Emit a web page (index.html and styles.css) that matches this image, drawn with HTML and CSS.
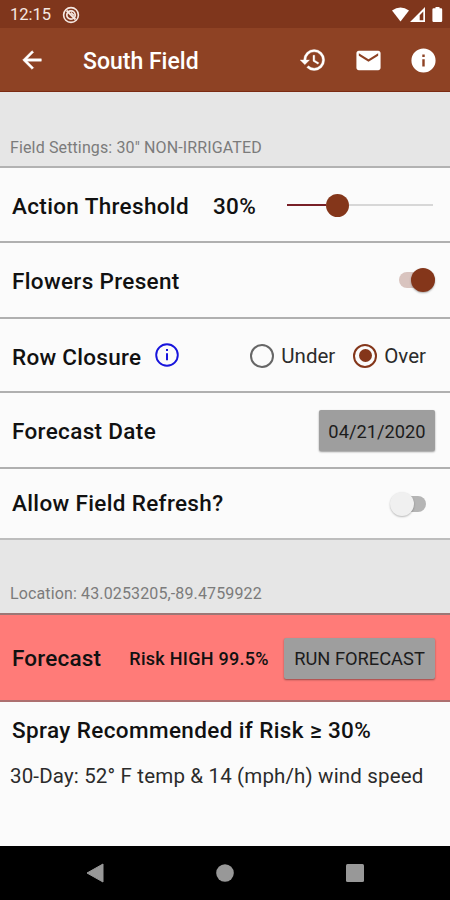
FILE: index.html
```html
<!DOCTYPE html>
<html lang="en">
<head>
<meta charset="utf-8">
<title>South Field</title>
<link rel="stylesheet" href="styles.css">
</head>
<body>
<div class="status">
  <span class="clock">12:15</span>
  <svg class="notif" width="18" height="18" viewBox="0 0 18 18" fill="none" stroke="#f6e9e3"><circle cx="9" cy="9" r="7.400" stroke-width="1.600"/><circle cx="9" cy="9" r="4.200" stroke-width="1.700"/><path d="M4.500 4.500l9 9" stroke-width="1.800"/><path d="M9 6.500l3 3" stroke-width="1.600"/></svg>
  <svg class="signals" width="54" height="18" viewBox="0 0 54 18" fill="#fff"><path d="M0 4.500Q8.500 -1.500 17 4.500L8.500 15.500z"/><path fill-rule="evenodd" d="M33 1v15H18z M31.300 5.500v8.800h-3.600V9.300z"/><path d="M43.500 1h4v1.200h1.500q1.200 0 1.200 1.200v11.400q0 1.200-1.200 1.200h-7.400q-1.200 0-1.200-1.200v-11.400q0-1.200 1.200-1.200h1.900z"/></svg>
</div>
<header class="toolbar">
  <svg class="back" width="28" height="28" viewBox="0 0 24 24" fill="#fff" stroke="#fff" stroke-width=".4"><path d="M20 11H7.830l5.590-5.590L12 4l-8 8 8 8 1.410-1.410L7.830 13H20v-2z"/></svg>
  <h1 class="title">South Field</h1>
  <svg class="tool history" width="28" height="28" viewBox="0 0 24 24" fill="#fff" stroke="#fff" stroke-width=".3"><path d="M13 3a9 9 0 0 0-9 9H1l3.890 3.890.07.14L9 12H6a7 7 0 1 1 7 7 6.960 6.960 0 0 1-4.940-2.060l-1.420 1.420A8.960 8.960 0 0 0 13 21a9 9 0 0 0 0-18zm-1 5v5l4.280 2.540.72-1.210-3.500-2.080V8H12z"/></svg>
  <svg class="tool" width="29" height="29" viewBox="0 0 24 24" fill="#fff"><path d="M20 4H4c-1.100 0-2 .9-2 2v12c0 1.100.9 2 2 2h16c1.100 0 2-.9 2-2V6c0-1.100-.9-2-2-2zm0 4l-8 5-8-5V6l8 5 8-5v2z"/></svg>
  <svg class="tool" width="29" height="29" viewBox="0 0 24 24" fill="#fff"><path d="M12 2a10 10 0 1 0 0 20 10 10 0 0 0 0-20zm1 15h-2v-6h2v6zm0-8h-2V7h2v2z"/></svg>
</header>
<main class="content">
  <div class="section settings">Field Settings: 30" NON-IRRIGATED</div>
  <div class="row threshold">
    <span class="label">Action Threshold</span>
    <span class="label percent">30%</span>
    <div class="slider"><div class="slider-fill"></div><div class="slider-knob"></div><div class="slider-rest"></div></div>
  </div>
  <div class="row flowers">
    <span class="label">Flowers Present</span>
    <div class="switch on"><div class="knob"></div></div>
  </div>
  <div class="row closure">
    <span class="label">Row Closure</span>
    <svg class="info" width="24" height="24" viewBox="0 0 24 24"><circle cx="12" cy="12" r="10.800" fill="none" stroke="#1714dc" stroke-width="1.900"/><path d="M11 6h2v2h-2zM11 10.300h2v7h-2z" fill="#1714dc"/></svg>
    <div class="radio"></div><span class="option under">Under</span>
    <div class="radio checked"></div><span class="option over">Over</span>
  </div>
  <div class="row date">
    <span class="label">Forecast Date</span>
    <button class="button date-button">04/21/2020</button>
  </div>
  <div class="row refresh">
    <span class="label">Allow Field Refresh?</span>
    <div class="switch off"><div class="knob"></div></div>
  </div>
  <div class="section location">Location: 43.0253205,-89.4759922</div>
  <div class="row forecast">
    <span class="label">Forecast</span>
    <span class="risk">Risk HIGH 99.5%</span>
    <button class="button run-button">RUN FORECAST</button>
  </div>
  <div class="summary">
    <p class="advice">Spray Recommended if Risk ≥ 30%</p>
    <p class="weather">30-Day: 52° F temp &amp; 14 (mph/h) wind speed</p>
  </div>
</main>
<nav class="navbar">
  <svg width="18" height="20" viewBox="0 0 18 20"><path d="M17 1v18L1 10z" fill="#989898" stroke="#989898" stroke-linejoin="round"/></svg>
  <svg width="18" height="18" viewBox="0 0 18 18"><circle cx="9" cy="9" r="8.800" fill="#989898"/></svg>
  <svg width="18" height="18" viewBox="0 0 18 18"><rect width="18" height="18" rx="1.500" fill="#989898"/></svg>
</nav>
</body>
</html>
```
FILE: styles.css
```css
* { box-sizing: border-box; }
body {
  margin: 0;
  width: 450px;
  height: 900px;
  display: flex;
  flex-direction: column;
  overflow: hidden;
  background: #fbfbfb;
  color: #111;
  font-family: Roboto, sans-serif;
  white-space: nowrap;
}
svg { display: block; flex: none; }
.status {
  height: 28px;
  flex: none;
  display: flex;
  align-items: center;
  padding: 1px 6px 0 10px;
  background: #7f361c;
  color: #f6e9e3;
}
.clock { width: 52px; font-size: 16.5px; }
.signals { margin-left: auto; margin-right: -2px; }
.toolbar {
  height: 64px;
  flex: none;
  display: flex;
  align-items: center;
  padding: 1px 12px 0 18px;
  background: #8e4224;
  border-bottom: 1px solid #7b2b13;
}
.title {
  margin: 3px auto 0 37px;
  color: #fff;
  font-size: 23px;
  font-weight: 500;
  line-height: 28px;
}
.tool { margin-left: 26px; }
.history { position: relative; left: -1px; }
.content { flex: 1; }
.section {
  display: flex;
  align-items: flex-end;
  padding: 0 10px 8px;
  background: #e6e6e6;
  border-bottom: 2px solid #b2b2b2;
  color: #7b7b7b;
  font-size: 16px;
  letter-spacing: 0.13px;
  line-height: 20px;
}
.settings { height: 76px; }
.location { height: 75px; padding-bottom: 9px; border-bottom-color: #9b7776; }
.row {
  display: flex;
  align-items: center;
  padding: 3px 15px 0 12px;
  border-bottom: 2px solid #b0b0b0;
}
.label {
  font-size: 22.5px;
  font-weight: 500;
  letter-spacing: 0.34px;
  line-height: 28px;
}
.threshold { height: 75px; }
.percent { margin-left: 24px; }
.slider { width: 146px; height: 24px; margin: -2px 2px 0 auto; display: flex; align-items: center; }
.slider-fill { width: 39px; height: 2px; background: #782027; }
.slider-knob { width: 23px; height: 23px; border-radius: 50%; background: #84361a; }
.slider-rest { flex: 1; height: 2px; background: #d7d7d7; }
.flowers { height: 76px; }
.flowers .label, .date .label, .refresh .label, .forecast .label { margin-top: -2px; }
.switch { height: 16px; border-radius: 8px; display: flex; align-items: center; margin-left: auto; }
.knob { width: 24px; height: 24px; flex: none; border-radius: 50%; }
.on { width: 36px; margin-top: -3px; justify-content: flex-end; background: #d9c4bf; }
.on .knob { background: #84361a; box-shadow: 0 1px 2px #0005; }
.closure { height: 74px; }
.closure .label { letter-spacing: 0.27px; }
.info { margin: -3px 0 0 14px; }
.radio {
  width: 24px;
  height: 24px;
  flex: none;
  margin: -2px 0 0 auto;
  border: 2px solid #666;
  border-radius: 50%;
}
.checked { display: grid; place-items: center; border-color: #84361a; margin-left: 18px; }
.checked::after { content: ""; width: 13px; height: 13px; border-radius: 50%; background: #84361a; }
.option { margin: -1px 0 0 7px; color: #2b2b2b; font-size: 20.5px; line-height: 26px; }
.over { margin-right: 9px; }
.date { height: 76px; }
.button {
  height: 41px;
  margin: -2px 0 0 auto;
  padding: 1px 0 0;
  border: 0;
  border-radius: 2px;
  background: #9e9e9e;
  box-shadow: 0 1px 2px #0006;
  color: #1c1c1c;
  font: 18.300px Roboto, sans-serif;
}
.date-button { width: 116px; }
.run-button { width: 151px; }
.refresh { height: 71px; padding-top: 1px; border-bottom-color: #bdbdbd; }
.off { width: 35px; margin: -1px 9px 0 auto; background: #b5b5b5; }
.off .knob { margin-left: -1px; background: #f0f0f0; box-shadow: 0 1px 2px #0004; }
.forecast { height: 87px; background: #ff7b78; border-bottom-color: #ad7070; }
.forecast .label { letter-spacing: 0.2px; }
.risk { margin: -1px 0 0 28px; font-size: 18px; font-weight: 500; letter-spacing: 0.28px; }
.summary { padding: 12px 10px 0; }
.advice { margin: 0 2px; font-size: 22.5px; font-weight: 500; letter-spacing: 0.38px; line-height: 32px; }
.weather { margin: 14px 0 0; color: #2b2b2b; font-size: 20.5px; letter-spacing: 0.16px; line-height: 32px; }
.navbar {
  height: 54px;
  flex: none;
  display: flex;
  align-items: center;
  justify-content: space-between;
  padding: 0 86px;
  background: #000;
}
```
